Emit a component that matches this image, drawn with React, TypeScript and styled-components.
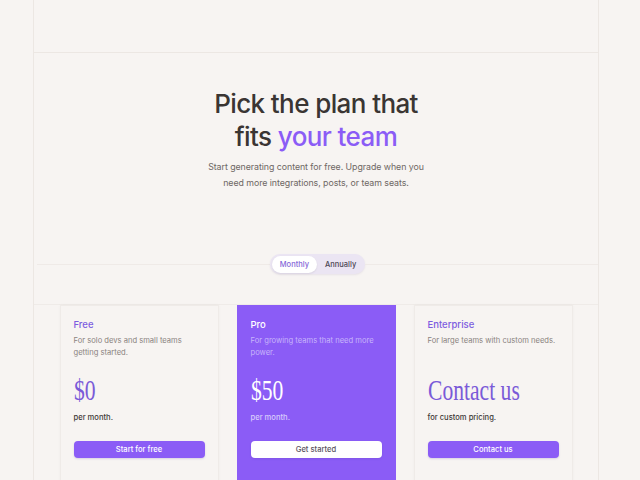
import React from "react";
import styled, { createGlobalStyle } from "styled-components";

const GlobalStyle = createGlobalStyle`
  html, body {
    margin: 0;
    padding: 0;
    background: #f7f4f2;
    font-family: Inter, "Noto Sans", sans-serif;
    -webkit-font-smoothing: antialiased;
  }
`;

const Frame = styled.div`
  margin-left: 33px;
  width: 564px;
  border-left: 1px solid #ece7e3;
  border-right: 1px solid #ece7e3;
  min-height: 480px;
`;

const TopBar = styled.div`
  height: 52px;
  border-bottom: 1px solid #ece7e3;
`;

const Hero = styled.section`
  padding-top: 34px;
  padding-bottom: 30px;
  border-bottom: 1px solid #efebe8;
  display: flex;
  flex-direction: column;
  align-items: center;
`;

const Heading = styled.h1`
  margin: 0;
  font-size: 26px;
  line-height: 33px;
  font-weight: 500;
  letter-spacing: -0.6px;
  color: #3a3533;
  text-align: center;
`;

const Accent = styled.span`
  color: #8b5cf6;
`;

const Subtitle = styled.p`
  margin: 6px 0 0;
  font-size: 8.8px;
  line-height: 16px;
  letter-spacing: -0.05px;
  color: #6e6764;
  text-align: center;
`;

const ToggleRow = styled.div`
  align-self: stretch;
  margin-top: 63px;
  display: flex;
  align-items: center;
  padding-left: 3px;
`;

const Rule = styled.div`
  flex: 1;
  height: 1px;
  background: #efeae7;
`;

const Toggle = styled.div`
  display: flex;
  align-items: center;
  height: 20px;
  padding: 0 2px;
  border-radius: 10px;
  background: #ebe5f3;
  box-shadow: 0 1px 2px rgba(120, 100, 160, 0.12);
`;

const ToggleOption = styled.div<{ $active?: boolean }>`
  height: 17px;
  display: flex;
  align-items: center;
  padding: ${(p) => (p.$active ? "0 8px" : "0 7px 0 8px")};
  border-radius: 9px;
  font-size: 7.5px;
  font-weight: 500;
  color: ${(p) => (p.$active ? "#8669d8" : "#4d4655")};
  background: ${(p) => (p.$active ? "#ffffff" : "transparent")};
  box-shadow: ${(p) => (p.$active ? "0 1px 2px rgba(0,0,0,0.08)" : "none")};
`;

const Cards = styled.section`
  display: grid;
  grid-template-columns: repeat(3, 159px);
  gap: 18px;
  justify-content: center;
`;

const Card = styled.div<{ $featured?: boolean }>`
  height: 176px;
  padding: 12px 13px 0;
  background: ${(p) => (p.$featured ? "#8b5cf6" : "#f7f4f2")};
  border: 1px solid ${(p) => (p.$featured ? "#8b5cf6" : "#efebe8")};
  border-bottom: none;
  box-shadow: ${(p) => (p.$featured ? "none" : "0 0 3px rgba(0,0,0,0.03)")};
  display: flex;
  flex-direction: column;
`;

const PlanName = styled.div<{ $featured?: boolean }>`
  font-size: 9.5px;
  line-height: 14px;
  font-weight: 500;
  color: ${(p) => (p.$featured ? "#ffffff" : "#7c5ce0")};
`;

const PlanDesc = styled.div<{ $featured?: boolean }>`
  margin-top: 3px;
  height: 24px;
  font-size: 7.6px;
  line-height: 12px;
  color: ${(p) => (p.$featured ? "#c7b5fb" : "#8a8380")};
`;

const Price = styled.div<{ $featured?: boolean }>`
  margin-top: 16px;
  font-family: "Liberation Serif", "Times New Roman", serif;
  font-size: 30px;
  line-height: 30px;
  height: 30px;
  color: ${(p) => (p.$featured ? "#ffffff" : "#7a5ad8")};
  white-space: nowrap;
`;

const Narrow = styled.span`
  display: inline-block;
  transform: scaleX(0.72);
  transform-origin: left center;
`;

const Period = styled.div<{ $featured?: boolean }>`
  margin-top: 7px;
  font-size: 7.6px;
  line-height: 12px;
  font-weight: 500;
  color: ${(p) => (p.$featured ? "#d9ccfc" : "#3d3836")};
`;

const Button = styled.button<{ $featured?: boolean }>`
  margin-top: 17px;
  height: 17px;
  width: 100%;
  border: none;
  border-radius: 4px;
  font-family: Inter, "Noto Sans", sans-serif;
  font-size: 7.6px;
  font-weight: 500;
  cursor: pointer;
  background: ${(p) => (p.$featured ? "#ffffff" : "#8b5cf6")};
  color: ${(p) => (p.$featured ? "#5a5360" : "#ffffff")};
  box-shadow: 0 1px 2px rgba(80, 50, 160, 0.18);
`;

const plans = [
  {
    name: "Free",
    desc: "For solo devs and small teams getting started.",
    price: "$0",
    period: "per month.",
    cta: "Start for free",
  },
  {
    name: "Pro",
    desc: "For growing teams that need more power.",
    price: "$50",
    period: "per month.",
    cta: "Get started",
    featured: true,
  },
  {
    name: "Enterprise",
    desc: "For large teams with custom needs.",
    price: "Contact us",
    period: "for custom pricing.",
    cta: "Contact us",
  },
];

export default function App() {
  return (
    <>
      <GlobalStyle />
      <Frame>
        <TopBar />
        <Hero>
          <Heading>
            Pick the plan that
            <br />
            fits <Accent>your team</Accent>
          </Heading>
          <Subtitle>
            Start generating content for free. Upgrade when you
            <br />
            need more integrations, posts, or team seats.
          </Subtitle>
          <ToggleRow>
            <Rule />
            <Toggle>
              <ToggleOption $active>Monthly</ToggleOption>
              <ToggleOption>Annually</ToggleOption>
            </Toggle>
            <Rule />
          </ToggleRow>
        </Hero>
        <Cards>
          {plans.map((p) => (
            <Card key={p.name} $featured={p.featured}>
              <PlanName $featured={p.featured}>{p.name}</PlanName>
              <PlanDesc $featured={p.featured}>{p.desc}</PlanDesc>
              <Price $featured={p.featured}>
                <Narrow>{p.price}</Narrow>
              </Price>
              <Period $featured={p.featured}>{p.period}</Period>
              <Button $featured={p.featured}>{p.cta}</Button>
            </Card>
          ))}
        </Cards>
      </Frame>
    </>
  );
}
